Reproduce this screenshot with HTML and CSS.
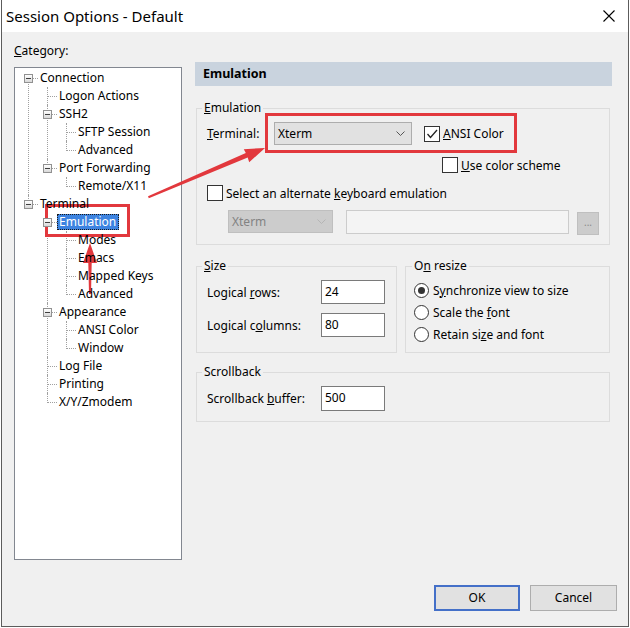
FILE: index.html
```html
<!DOCTYPE html>
<html>
<head>
<meta charset="utf-8">
<link rel="stylesheet" href="styles.css">
</head>
<body>
<div class="window">
  <div class="titlebar">
    <span class="title">Session Options - Default</span>
    <svg class="close" width="12" height="12" viewBox="0 0 12 12"><path d="M0.5 0.5 L11.5 11.5 M11.5 0.5 L0.5 11.5" stroke="#000" stroke-width="1.1" fill="none"/></svg>
  </div>
  <div class="body">
    <div class="main">
      <div class="left">
        <div class="cat-label"><u>C</u>ategory:</div>
        <div class="tree">
          <ul class="tree-root">
            <li>
              <div class="row"><span class="exp"></span><span class="lbl">Connection</span></div>
              <ul>
                <li><div class="row"><span class="lbl">Logon Actions</span></div></li>
                <li>
                  <div class="row"><span class="exp"></span><span class="lbl">SSH2</span></div>
                  <ul>
                    <li><div class="row"><span class="lbl">SFTP Session</span></div></li>
                    <li><div class="row"><span class="lbl">Advanced</span></div></li>
                  </ul>
                </li>
                <li>
                  <div class="row"><span class="exp"></span><span class="lbl">Port Forwarding</span></div>
                  <ul>
                    <li><div class="row"><span class="lbl">Remote/X11</span></div></li>
                  </ul>
                </li>
              </ul>
            </li>
            <li>
              <div class="row"><span class="exp"></span><span class="lbl">Terminal</span></div>
              <ul>
                <li>
                  <div class="row"><span class="exp"></span><span class="lbl selected">Emulation</span></div>
                  <ul>
                    <li><div class="row"><span class="lbl">Modes</span></div></li>
                    <li><div class="row"><span class="lbl">Emacs</span></div></li>
                    <li><div class="row"><span class="lbl">Mapped Keys</span></div></li>
                    <li><div class="row"><span class="lbl">Advanced</span></div></li>
                  </ul>
                </li>
                <li>
                  <div class="row"><span class="exp"></span><span class="lbl">Appearance</span></div>
                  <ul>
                    <li><div class="row"><span class="lbl">ANSI Color</span></div></li>
                    <li><div class="row"><span class="lbl">Window</span></div></li>
                  </ul>
                </li>
                <li><div class="row"><span class="lbl">Log File</span></div></li>
                <li><div class="row"><span class="lbl">Printing</span></div></li>
                <li><div class="row"><span class="lbl">X/Y/Zmodem</span></div></li>
              </ul>
            </li>
          </ul>
        </div>
      </div>
      <div class="right">
        <div class="header">Emulation</div>
        <fieldset class="group emu">
          <legend><u>E</u>mulation</legend>
          <div class="emu-row1">
            <span class="lbl-terminal"><u>T</u>erminal:</span>
            <div class="combo"><span>Xterm</span><svg width="9" height="5" viewBox="0 0 9 5"><path d="M0.5 0.5 L4.5 4.5 L8.5 0.5" fill="none" stroke="#555" stroke-width="1"/></svg></div>
            <span class="check checked"><svg width="14" height="14" viewBox="0 0 14 14"><path d="M2.5 7 L5.5 10.5 L12 3" fill="none" stroke="#222" stroke-width="1.3"/></svg></span>
            <span class="check-lbl"><u>A</u>NSI Color</span>
          </div>
          <div class="emu-row2">
            <span class="check"></span>
            <span class="check-lbl"><u>U</u>se color scheme</span>
          </div>
          <div class="emu-row3">
            <span class="check"></span>
            <span class="check-lbl">Select an alternate <u>k</u>eyboard emulation</span>
          </div>
          <div class="emu-row4">
            <div class="combo disabled"><span>Xterm</span><svg width="9" height="5" viewBox="0 0 9 5"><path d="M0.5 0.5 L4.5 4.5 L8.5 0.5" fill="none" stroke="#b5b5b5" stroke-width="1"/></svg></div>
            <div class="text-disabled"></div>
            <div class="dots-btn">...</div>
          </div>
        </fieldset>
        <div class="pair">
          <fieldset class="group size">
            <legend><u>S</u>ize</legend>
            <div class="field-row">
              <span class="field-lbl">Logical <u>r</u>ows:</span>
              <div class="input">24</div>
            </div>
            <div class="field-row second">
              <span class="field-lbl">Logical c<u>o</u>lumns:</span>
              <div class="input">80</div>
            </div>
          </fieldset>
          <fieldset class="group resize">
            <legend>O<u>n</u> resize</legend>
            <div class="radio-row"><span class="radio on"></span><span>S<u>y</u>nchronize view to size</span></div>
            <div class="radio-row"><span class="radio"></span><span>Scale the <u>f</u>ont</span></div>
            <div class="radio-row"><span class="radio"></span><span>Retain si<u>z</u>e and font</span></div>
          </fieldset>
        </div>
        <fieldset class="group scroll">
          <legend>Scrollback</legend>
          <div class="field-row">
            <span class="field-lbl">Scrollback <u>b</u>uffer:</span>
            <div class="input tall">500</div>
          </div>
        </fieldset>
      </div>
    </div>
    <div class="buttons">
      <div class="btn default">OK</div>
      <div class="btn">Cancel</div>
    </div>
  </div>
</div>
<svg class="annot" width="630" height="628" viewBox="0 0 630 628">
  <rect x="46.5" y="205.5" width="82" height="30" fill="none" stroke="#e2383d" stroke-width="3"/>
  <rect x="266.5" y="114.5" width="249" height="37" fill="none" stroke="#e2383d" stroke-width="3"/>
  <polygon points="148,196.2 148.8,198.2 247.7,157.6 249.2,162.2 265,148 243.8,149.2 245.8,152.9" fill="#e2383d"/>
  <polygon points="90,243 83,263 88.3,263 89,294 91,294 91.7,263 97,263" fill="#e2383d"/>
</svg>
</body>
</html>
```
FILE: styles.css
```css
* { box-sizing: border-box; }
html, body { margin: 0; padding: 0; }
body {
  position: relative;
  width: 630px;
  height: 628px;
  background: #fff;
  font-family: "Noto Sans", "Liberation Sans", sans-serif;
  font-size: 12px;
  color: #000;
}
.window {
  margin-left: 1px;
  width: 628px;
  height: 627px;
  border: 1px solid #5c5c5c;
  border-top: 0;
  display: flex;
  flex-direction: column;
}
.titlebar {
  height: 32px;
  flex: none;
  background: #fff;
  display: flex;
  align-items: center;
  justify-content: space-between;
  padding: 0 13px 0 4px;
}
.title { font-size: 15px; }
.close { display: block; }
.body {
  flex: 1;
  background: #f0f0f0;
  display: flex;
  flex-direction: column;
  padding: 0 11px 15px 12px;
}
.main { flex: 1; display: flex; gap: 13px; }
.left { width: 168px; display: flex; flex-direction: column; }
.cat-label { margin-top: 11px; height: 16px; line-height: 16px; }
.tree {
  margin-top: 8px;
  height: 493px;
  background: #fff;
  border: 1px solid #828790;
  padding-top: 1px;
}
.tree ul { list-style: none; margin: 0; padding: 0; }
.tree ul ul { margin-left: 19px; }
.tree li { position: relative; }
.tree li::before {
  content: "";
  position: absolute;
  left: 13px;
  top: 0;
  bottom: 0;
  border-left: 1px dotted #a0a0a0;
}
.tree li:last-child::before { bottom: auto; height: 10px; }
.tree-root > li:first-child::before { top: 9px; }
.tree li::after {
  content: "";
  position: absolute;
  left: 14px;
  top: 9px;
  width: 9px;
  border-top: 1px dotted #a0a0a0;
}
.row {
  position: relative;
  z-index: 1;
  height: 18px;
  padding-left: 23px;
  display: flex;
  align-items: center;
}
.exp {
  position: absolute;
  left: 9px;
  top: 5px;
  width: 9px;
  height: 9px;
  border: 1px solid #919191;
  background: linear-gradient(#ffffff, #d8d8d8);
}
.exp::after {
  content: "";
  position: absolute;
  left: 1px;
  top: 3px;
  width: 5px;
  height: 1px;
  background: #404040;
}
.lbl {
  height: 16px;
  line-height: 14px;
  padding: 0 2px 0 1px;
  border: 1px solid transparent;
  white-space: nowrap;
}
.lbl.selected {
  background: #3d83e0;
  color: #fff;
  border: 1px dotted #1a1a1a;
}
.right { width: 417px; display: flex; flex-direction: column; }
.header {
  margin-top: 30px;
  height: 24px;
  line-height: 24px;
  background: #c9d3de;
  font-weight: bold;
  font-size: 12.5px;
  padding-left: 8px;
}
.group {
  margin: 0;
  border: 1px solid #dcdcdc;
  min-width: 0;
  padding: 6px 10px 9px 10px;
}
.group legend {
  padding: 0 2px;
  margin-left: -5px;
  line-height: 16px;
}
.emu { margin: 14px 0 0 1px; width: 414px; }
.emu-row1 { display: flex; align-items: center; height: 23px; }
.lbl-terminal { width: 67px; }
.combo {
  width: 138px;
  height: 23px;
  background: #e1e1e1;
  border: 1px solid #adadad;
  display: flex;
  align-items: center;
  justify-content: space-between;
  padding: 0 6px 0 3px;
}
.combo svg { display: block; }
.combo.disabled {
  width: 105px;
  background: #cccccc;
  border-color: #bfbfbf;
  color: #838383;
}
.check {
  width: 16px;
  height: 16px;
  flex: none;
  border: 1px solid #333;
  background: #fff;
  display: flex;
  align-items: center;
  justify-content: center;
}
.check svg { display: block; }
.emu-row1 .check { margin-left: 12px; }
.check-lbl { margin-left: 3px; white-space: nowrap; }
.emu-row2 { display: flex; align-items: center; height: 16px; margin: 12px 0 0 235px; }
.emu-row3 { display: flex; align-items: center; height: 16px; margin-top: 12px; }
.emu-row4 { display: flex; align-items: flex-start; margin: 9px 0 0 21px; }
.text-disabled {
  margin-left: 13px;
  width: 223px;
  height: 24px;
  background: #f4f4f4;
  border: 1px solid #cccccc;
}
.dots-btn {
  margin: 2px 0 0 8px;
  width: 22px;
  height: 23px;
  background: #cccccc;
  border: 1px solid #bfbfbf;
  color: #8a8a8a;
  font-size: 10px;
  line-height: 18px;
  text-align: center;
}
.pair { display: flex; gap: 8px; margin: 13px 0 0 1px; }
.size { width: 201px; padding-bottom: 15px; }
.resize { width: 205px; padding: 5px 8px 7px 8px; }
.resize legend { margin-left: -2px; }
.field-row { display: flex; align-items: center; }
.field-row.second { margin-top: 9px; }
.field-lbl { width: 114px; white-space: nowrap; }
.input {
  width: 64px;
  height: 24px;
  background: #fff;
  border: 1px solid #7a7a7a;
  padding-left: 3px;
  line-height: 21px;
}
.input.tall { height: 25px; line-height: 22px; }
.radio-row { display: flex; align-items: center; height: 22px; }
.radio {
  width: 15px;
  height: 15px;
  border: 1px solid #333;
  border-radius: 50%;
  background: #fff;
  margin-right: 4px;
  flex: none;
  display: flex;
  align-items: center;
  justify-content: center;
}
.radio.on::after {
  content: "";
  width: 7px;
  height: 7px;
  border-radius: 50%;
  background: #333;
}
.scroll { margin: 11px 0 0 1px; width: 414px; padding-bottom: 10px; }
.buttons { display: flex; justify-content: flex-end; gap: 10px; }
.btn {
  width: 87px;
  height: 26px;
  background: #e1e1e1;
  border: 1px solid #adadad;
  text-align: center;
  line-height: 24px;
}
.btn.default { width: 86px; border: 2px solid #4470c8; line-height: 22px; }
.annot { position: absolute; left: 0; top: 0; pointer-events: none; }
```
